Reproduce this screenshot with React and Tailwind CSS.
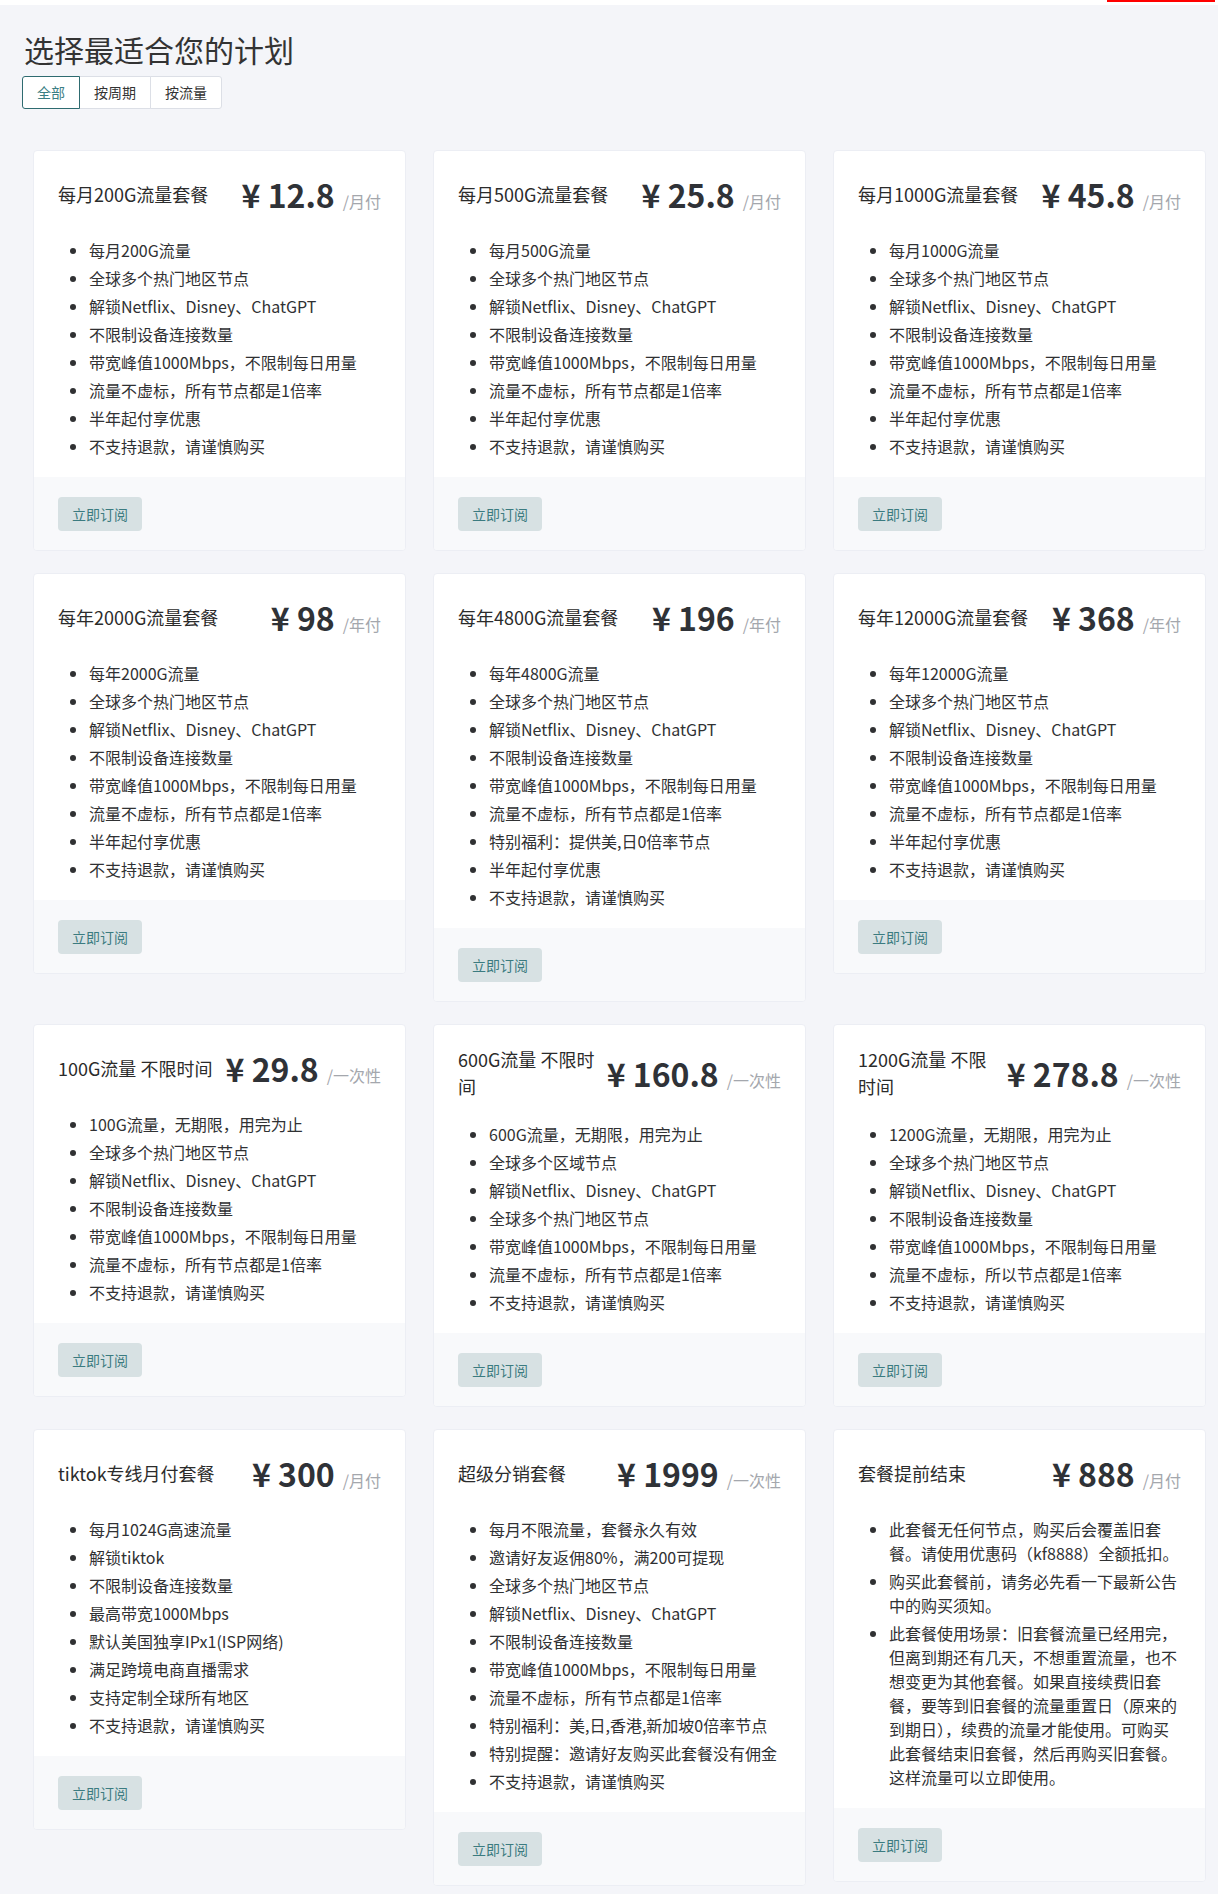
import React from 'react';

const NET = '解锁Netflix、Disney、ChatGPT';
const NODES = '全球多个热门地区节点';
const DEVICES = '不限制设备连接数量';
const BW = '带宽峰值1000Mbps，不限制每日用量';
const RATE = '流量不虚标，所有节点都是1倍率';
const HALF = '半年起付享优惠';
const NOREFUND = '不支持退款，请谨慎购买';

const plans = [
  { name: '每月200G流量套餐', price: '12.8', unit: '/月付', items: ['每月200G流量', NODES, NET, DEVICES, BW, RATE, HALF, NOREFUND] },
  { name: '每月500G流量套餐', price: '25.8', unit: '/月付', items: ['每月500G流量', NODES, NET, DEVICES, BW, RATE, HALF, NOREFUND] },
  { name: '每月1000G流量套餐', price: '45.8', unit: '/月付', items: ['每月1000G流量', NODES, NET, DEVICES, BW, RATE, HALF, NOREFUND] },
  { name: '每年2000G流量套餐', price: '98', unit: '/年付', items: ['每年2000G流量', NODES, NET, DEVICES, BW, RATE, HALF, NOREFUND] },
  { name: '每年4800G流量套餐', price: '196', unit: '/年付', items: ['每年4800G流量', NODES, NET, DEVICES, BW, RATE, '特别福利：提供美,日0倍率节点', HALF, NOREFUND] },
  { name: '每年12000G流量套餐', price: '368', unit: '/年付', items: ['每年12000G流量', NODES, NET, DEVICES, BW, RATE, HALF, NOREFUND] },
  { name: '100G流量 不限时间', price: '29.8', unit: '/一次性', items: ['100G流量，无期限，用完为止', NODES, NET, DEVICES, BW, RATE, NOREFUND] },
  { name: '600G流量 不限时间', price: '160.8', unit: '/一次性', items: ['600G流量，无期限，用完为止', '全球多个区域节点', NET, NODES, BW, RATE, NOREFUND] },
  { name: '1200G流量 不限时间', price: '278.8', unit: '/一次性', items: ['1200G流量，无期限，用完为止', NODES, NET, DEVICES, BW, '流量不虚标，所以节点都是1倍率', NOREFUND] },
  { name: 'tiktok专线月付套餐', price: '300', unit: '/月付', items: ['每月1024G高速流量', '解锁tiktok', DEVICES, '最高带宽1000Mbps', '默认美国独享IPx1(ISP网络)', '满足跨境电商直播需求', '支持定制全球所有地区', NOREFUND] },
  { name: '超级分销套餐', price: '1999', unit: '/一次性', items: ['每月不限流量，套餐永久有效', '邀请好友返佣80%，满200可提现', NODES, NET, DEVICES, BW, RATE, '特别福利：美,日,香港,新加坡0倍率节点', '特别提醒：邀请好友购买此套餐没有佣金', NOREFUND] },
  {
    name: '套餐提前结束',
    price: '888',
    unit: '/月付',
    items: [
      '此套餐无任何节点，购买后会覆盖旧套餐。请使用优惠码（kf8888）全额抵扣。',
      '购买此套餐前，请务必先看一下最新公告中的购买须知。',
      '此套餐使用场景：旧套餐流量已经用完，但离到期还有几天，不想重置流量，也不想变更为其他套餐。如果直接续费旧套餐，要等到旧套餐的流量重置日（原来的到期日），续费的流量才能使用。可购买此套餐结束旧套餐，然后再购买旧套餐。这样流量可以立即使用。',
    ],
  },
];

function PlanCard({ plan }) {
  return (
    <div className="bg-white border border-[#eceef4] rounded overflow-hidden">
      {/* header */}
      <div className="flex items-center justify-between gap-2 px-6 pt-[21px]">
        <h3 className="min-w-0 flex-1 text-[18px] leading-[27px] text-[#2b2b2b] font-normal">{plan.name}</h3>
        <div className="shrink-0 whitespace-nowrap h-[44px] leading-[44px]">
          <span className="text-[32px] font-bold text-[#2f3237]">¥ {plan.price}</span>
          <span className="ml-2 text-[16px] leading-none text-[#a4a7ad]">{plan.unit}</span>
        </div>
      </div>

      {/* features */}
      <ul className="list-disc pl-[55px] pr-6 pt-5 pb-[17px] text-[16px] text-[#303133]">
        {plan.items.map((item, i) => (
          <li key={i} className="leading-6 py-[2px]">{item}</li>
        ))}
      </ul>

      {/* footer */}
      <div className="bg-[#f8f9fb] px-6 pt-5 pb-[19px]">
        <button className="h-[34px] w-[84px] rounded bg-[#d7e1e3] text-[14px] text-[#3b7b80]">立即订阅</button>
      </div>
    </div>
  );
}

export default function App() {
  const tabs = ['全部', '按周期', '按流量'];

  return (
    <div className="min-h-screen bg-[#f4f5f9] font-['Noto_Sans_CJK_SC',sans-serif]">
      {/* top strip */}
      <div className="relative h-[5px] bg-white">
        <div className="absolute right-[3px] top-0 h-[2px] w-[108px] bg-[#ff0000]"></div>
      </div>

      <div className="pl-[22px] pr-[12px] pt-[26px] pb-[7px]">
        <h1 className="pl-[2px] text-[30px] leading-[36px] font-normal text-[#333]">选择最适合您的计划</h1>

        {/* tabs */}
        <div className="mt-[9px] flex">
          {tabs.map((t, i) => (
            <button
              key={t}
              className={`h-[33px] px-[14px] text-[14px] bg-white border ${
                i === 0
                  ? 'border-[#2e6b70] text-[#3a7e84] rounded-l-[3px] relative z-10'
                  : 'border-[#dcdfe6] text-[#333] -ml-px'
              } ${i === tabs.length - 1 ? 'rounded-r-[3px]' : ''}`}
            >
              {t}
            </button>
          ))}
        </div>

        {/* plans */}
        <div className="ml-[11px] mt-[41px] grid grid-cols-3 items-start gap-x-[27px] gap-y-[22px]">
          {plans.map((p) => (
            <PlanCard key={p.name} plan={p} />
          ))}
        </div>
      </div>
    </div>
  );
}
